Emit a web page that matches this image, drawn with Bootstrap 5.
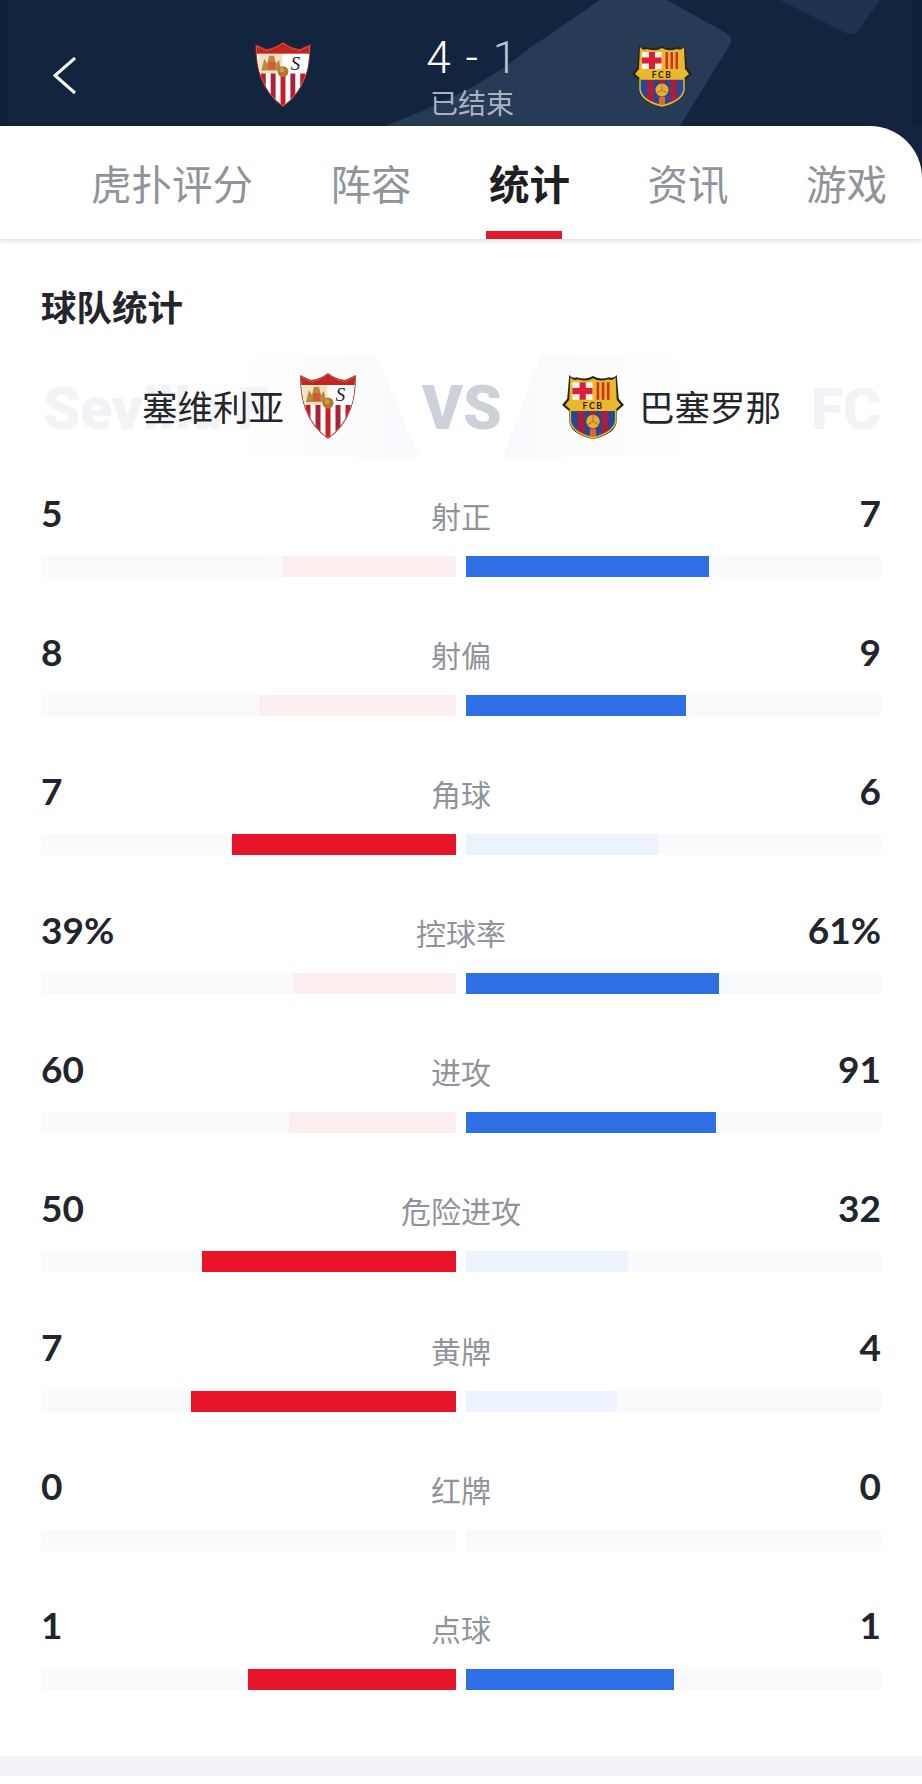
<!DOCTYPE html>
<html lang="zh-CN">
<head>
<meta charset="utf-8">
<title>球队统计</title>
<link href="https://cdn.jsdelivr.net/npm/bootstrap@5.3.0/dist/css/bootstrap.min.css" rel="stylesheet">
<style>
html,body{margin:0;background:#fff;}
body{width:922px;height:1784px;overflow:hidden;font-family:"Noto Sans CJK SC","Noto Sans",sans-serif;color:#22252b;}
.sym-defs{position:absolute;width:0;height:0;}
.match-top{position:relative;background:#13243f;height:239px;}
.match-art{position:absolute;left:0;top:0;width:922px;height:126px;}
.top-row{position:relative;height:126px;display:grid;grid-template-columns:255px 56px 322px 60px;align-items:start;}
.back-cell{padding:57px 0 0 53px;line-height:0;}
.crest-a{margin-top:42px;width:56px;height:65px;}
.crest-b{margin-top:43px;width:60px;height:64px;margin-left:-1px;}
.score-cell{padding-top:33px;display:flex;flex-direction:column;align-items:center;}
.score-num{font-family:Roboto,sans-serif;font-weight:300;font-size:44px;line-height:50px;color:#fff;letter-spacing:.5px;word-spacing:3px;}
.score-num span{color:#b9c4d3;}
.score-state{font-size:28px;line-height:34px;color:#a7b2c3;margin-top:2px;}
.tabs-bar{position:relative;height:113px;background:#fff;border-top-right-radius:52px;box-shadow:0 2px 5px rgba(0,0,0,.13);padding-left:91px;gap:77.5px;}
.tab-link{position:relative;padding:0;font-size:40.5px;line-height:113px;height:113px;color:#8f949c;white-space:nowrap;}
.tab-link.now{color:#1d1f24;font-weight:700;}
.tab-link.now::after{content:"";position:absolute;left:-3px;bottom:0;width:76px;height:8px;background:#df1a2e;}
.stats-area{padding:45px 41px 0;}
.stats-title{font-size:35.5px;line-height:44px;font-weight:700;margin:0 0 27px;color:#22252b;}
.versus{position:relative;height:102px;margin-bottom:33px;}
.versus-art{position:absolute;left:-41px;top:0;width:922px;height:102px;}
.ghost{position:absolute;top:25px;font-family:Roboto,sans-serif;font-weight:900;font-size:60px;line-height:58px;color:#f2f3f6;white-space:nowrap;}
.ghost-l{left:2px;letter-spacing:-.5px;}
.ghost-r{right:0;font-size:58px;}
.versus-line{position:relative;height:102px;display:grid;grid-template-columns:101px 142px 16px 56px 66px 78px 61px 64px 14px 140px;align-items:center;}
.team-name{font-size:35.5px;line-height:40px;white-space:nowrap;color:#24262b;}
.vs-word{font-family:Roboto,sans-serif;font-weight:900;font-size:62px;line-height:60px;color:#ccd1db;text-align:center;padding-top:4px;white-space:nowrap;}
.crest-c{width:56px;height:66px;}
.crest-d{width:64px;height:66px;margin-top:-1px;}
.stat-row{margin-bottom:52.1px;}
.stat-head{display:grid;grid-template-columns:1fr auto 1fr;align-items:center;height:40px;margin-bottom:26px;}
.stat-v{font-family:Lato,sans-serif;font-weight:700;font-size:37px;line-height:40px;color:#22252b;}
.stat-n{font-size:30px;line-height:40px;color:#8f949c;padding-top:5px;}
.stat-bars{display:flex;gap:10px;}
.half{flex:0 0 415px;height:21px;border-radius:0;background:#f9fafb;}
.half .progress-bar{height:21px;}
.fill-red{background:#e8142a;}
.fill-red-soft{background:#fdeff0;}
.fill-blue{background:#2e6fe6;}
.fill-blue-soft{background:#edf3fe;}
.foot-band{position:absolute;left:0;top:1756px;width:922px;height:20px;background:#f1f2f5;}
</style>
</head>
<body>
<svg class="sym-defs" aria-hidden="true">
<defs>
<clipPath id="sevShield"><path d="M1,4 L11,9 Q20,7 28,1 Q36,7 45,9 L55,4 Q55,22 50,36 Q43,54 28,65 Q13,54 6,36 Q1,22 1,4Z"/></clipPath>
<clipPath id="fcbLow"><path d="M8,36 H52 V47 Q50,58 30,63 Q10,58 8,47Z"/></clipPath>
</defs>
<symbol id="sev" viewBox="0 0 56 66">
<path d="M0,2 L11,7 Q20,6 28,0 Q36,6 45,7 L56,2 Q56,22 51,36 Q44,55 28,66 Q12,55 5,36 Q0,22 0,2Z" fill="#b3352a"/>
<g clip-path="url(#sevShield)">
<rect x="0" y="0" width="56" height="66" fill="#fff"/>
<rect x="0" y="0" width="56" height="12" fill="#c4261f"/>
<rect x="3" y="12" width="24.500" height="20" fill="#efe3c4"/>
<rect x="28.500" y="12" width="25" height="20" fill="#fff"/>
<rect x="5.500" y="32" width="5" height="32" fill="#c01e2b"/>
<rect x="15.500" y="32" width="5" height="32" fill="#a82238"/>
<rect x="25.500" y="32" width="5" height="34" fill="#cc1c28"/>
<rect x="35.500" y="32" width="5" height="32" fill="#a82238"/>
<rect x="45.500" y="32" width="5" height="32" fill="#c01e2b"/>
<path d="M6,29 L9,17 L12,22 L14,14 L19,14 L21,22 L24,18 L26,29Z" fill="#b98a3c"/>
<path d="M13,20h7v8h-7z" fill="#d55a3c"/>
</g>
<circle cx="28" cy="30" r="5.500" fill="#b4762a"/>
<circle cx="27" cy="28.500" r="2.500" fill="#d99a48"/>
<text x="40.500" y="28" font-family="'Liberation Serif',serif" font-style="italic" font-size="19" text-anchor="middle" fill="#1b1b1f">S</text>
</symbol>
<symbol id="fcb" viewBox="0 0 60 64">
<path d="M7,2 Q10,6 14,4 Q24,7 30,3 Q36,7 46,4 Q50,6 53,2 L55,25 L60,31 L53,37 L53,47 Q52,59 30,64 Q8,59 7,47 L7,37 L0,31 L5,25Z" fill="#2a2413"/>
<path d="M8,4 Q11,8 15,6 Q24,9 30,5 Q36,9 45,6 Q49,8 52,4 L53,26 L57,31 L51,36 L51,47 Q50,57 30,62 Q10,57 9,47 L9,36 L3,31 L7,26Z" fill="#e8b92e"/>
<rect x="10" y="9" width="19.500" height="17" fill="#f6f3ea"/>
<rect x="17" y="9" width="6" height="17" fill="#d8203a"/>
<rect x="10" y="14.500" width="19.500" height="6" fill="#d8203a"/>
<rect x="31" y="9" width="19" height="17" fill="#f0b429"/>
<g fill="#c8302a"><rect x="33.500" y="9" width="2.500" height="17"/><rect x="38.500" y="9" width="2.500" height="17"/><rect x="43.500" y="9" width="2.500" height="17"/></g>
<text x="30" y="34.500" font-family="Lato,sans-serif" font-weight="700" font-size="8.500" letter-spacing="1.500" text-anchor="middle" fill="#2a2413">FCB</text>
<g clip-path="url(#fcbLow)">
<rect x="8" y="36" width="44" height="28" fill="#204a9c"/>
<g fill="#a3203f"><rect x="15" y="36" width="7" height="28"/><rect x="27" y="36" width="6" height="28"/><rect x="38" y="36" width="7" height="28"/></g>
<rect x="27" y="54" width="6" height="9" fill="#d9682a"/>
</g>
<path d="M8,36 H52 V47 Q50,58 30,63 Q10,58 8,47Z" fill="none" stroke="#e8b92e" stroke-width="1.500"/>
<circle cx="30" cy="47" r="6.500" fill="#e5b02f"/>
<path d="M30,41 V47 L25,50 M30,47 L35,50" stroke="#a9781c" stroke-width="1" fill="none"/>
</symbol>
</svg>

<header class="match-top">
<svg class="match-art" viewBox="0 0 922 126" aria-hidden="true">
<path d="M600,0 H667 L726,33 Q734,38 729,46 L680,126 H385 Q480,90 527,50Z" fill="#273a56"/>
<path d="M780,0 L846,33 Q855,37 860,28 L880,0Z" fill="#20324d"/>
<rect x="912" y="0" width="10" height="126" fill="#0f2039"/>
<rect x="0" y="0" width="7" height="126" fill="#0f2039"/>
</svg>
<div class="top-row">
<div class="back-cell"><svg width="24" height="38" viewBox="0 0 24 38"><polyline points="22,1 2,18.500 22,36" fill="none" stroke="#fff" stroke-width="3"/></svg></div>
<svg class="crest-a"><use href="#sev"/></svg>
<div class="score-cell">
<div class="score-num">4 - <span>1</span></div>
<div class="score-state">已结束</div>
</div>
<svg class="crest-b"><use href="#fcb"/></svg>
</div>
<nav class="nav flex-nowrap tabs-bar">
<a class="nav-link tab-link" href="#">虎扑评分</a>
<a class="nav-link tab-link" href="#">阵容</a>
<a class="nav-link tab-link now" href="#">统计</a>
<a class="nav-link tab-link" href="#">资讯</a>
<a class="nav-link tab-link" href="#">游戏</a>
</nav>
</header>

<main class="stats-area">
<h2 class="stats-title">球队统计</h2>
<div class="versus">
<svg class="versus-art" viewBox="0 0 922 102" aria-hidden="true">
<defs>
<linearGradient id="fadeL" x1="0" x2="1" y1="0" y2="0"><stop offset="0" stop-color="#fff"/><stop offset="1" stop-color="#f8f9fc"/></linearGradient>
<linearGradient id="fadeR" x1="1" x2="0" y1="0" y2="0"><stop offset="0" stop-color="#fff"/><stop offset="1" stop-color="#f8f9fc"/></linearGradient>
</defs>
<path d="M230,0 H376 L419,102 H230Z" fill="url(#fadeL)"/>
<path d="M541,0 H700 V102 H503Z" fill="url(#fadeR)"/>
</svg>
<div class="ghost ghost-l">Sevilla F</div>
<div class="ghost ghost-r">FC</div>
<div class="versus-line">
<span></span>
<span class="team-name">塞维利亚</span>
<span></span>
<svg class="crest-c"><use href="#sev"/></svg>
<span></span>
<span class="vs-word">VS</span>
<span></span>
<svg class="crest-d"><use href="#fcb"/></svg>
<span></span>
<span class="team-name">巴塞罗那</span>
</div>
</div>

<section class="stat-row"><div class="stat-head"><span class="stat-v">5</span><span class="stat-n">射正</span><span class="stat-v text-end">7</span></div>
<div class="stat-bars"><div class="progress half justify-content-end"><div class="progress-bar fill-red-soft" style="width:174px"></div></div><div class="progress half"><div class="progress-bar fill-blue" style="width:243px"></div></div></div></section>

<section class="stat-row"><div class="stat-head"><span class="stat-v">8</span><span class="stat-n">射偏</span><span class="stat-v text-end">9</span></div>
<div class="stat-bars"><div class="progress half justify-content-end"><div class="progress-bar fill-red-soft" style="width:197px"></div></div><div class="progress half"><div class="progress-bar fill-blue" style="width:220px"></div></div></div></section>

<section class="stat-row"><div class="stat-head"><span class="stat-v">7</span><span class="stat-n">角球</span><span class="stat-v text-end">6</span></div>
<div class="stat-bars"><div class="progress half justify-content-end"><div class="progress-bar fill-red" style="width:224px"></div></div><div class="progress half"><div class="progress-bar fill-blue-soft" style="width:192px"></div></div></div></section>

<section class="stat-row"><div class="stat-head"><span class="stat-v">39%</span><span class="stat-n">控球率</span><span class="stat-v text-end">61%</span></div>
<div class="stat-bars"><div class="progress half justify-content-end"><div class="progress-bar fill-red-soft" style="width:162px"></div></div><div class="progress half"><div class="progress-bar fill-blue" style="width:253px"></div></div></div></section>

<section class="stat-row"><div class="stat-head"><span class="stat-v">60</span><span class="stat-n">进攻</span><span class="stat-v text-end">91</span></div>
<div class="stat-bars"><div class="progress half justify-content-end"><div class="progress-bar fill-red-soft" style="width:167px"></div></div><div class="progress half"><div class="progress-bar fill-blue" style="width:250px"></div></div></div></section>

<section class="stat-row"><div class="stat-head"><span class="stat-v">50</span><span class="stat-n">危险进攻</span><span class="stat-v text-end">32</span></div>
<div class="stat-bars"><div class="progress half justify-content-end"><div class="progress-bar fill-red" style="width:254px"></div></div><div class="progress half"><div class="progress-bar fill-blue-soft" style="width:162px"></div></div></div></section>

<section class="stat-row"><div class="stat-head"><span class="stat-v">7</span><span class="stat-n">黄牌</span><span class="stat-v text-end">4</span></div>
<div class="stat-bars"><div class="progress half justify-content-end"><div class="progress-bar fill-red" style="width:265px"></div></div><div class="progress half"><div class="progress-bar fill-blue-soft" style="width:151px"></div></div></div></section>

<section class="stat-row"><div class="stat-head"><span class="stat-v">0</span><span class="stat-n">红牌</span><span class="stat-v text-end">0</span></div>
<div class="stat-bars"><div class="progress half justify-content-end"></div><div class="progress half"></div></div></section>

<section class="stat-row"><div class="stat-head"><span class="stat-v">1</span><span class="stat-n">点球</span><span class="stat-v text-end">1</span></div>
<div class="stat-bars"><div class="progress half justify-content-end"><div class="progress-bar fill-red" style="width:208px"></div></div><div class="progress half"><div class="progress-bar fill-blue" style="width:208px"></div></div></div></section>
</main>
<div class="foot-band"></div>
<script src="https://cdn.jsdelivr.net/npm/bootstrap@5.3.0/dist/js/bootstrap.bundle.min.js"></script>
</body>
</html>
